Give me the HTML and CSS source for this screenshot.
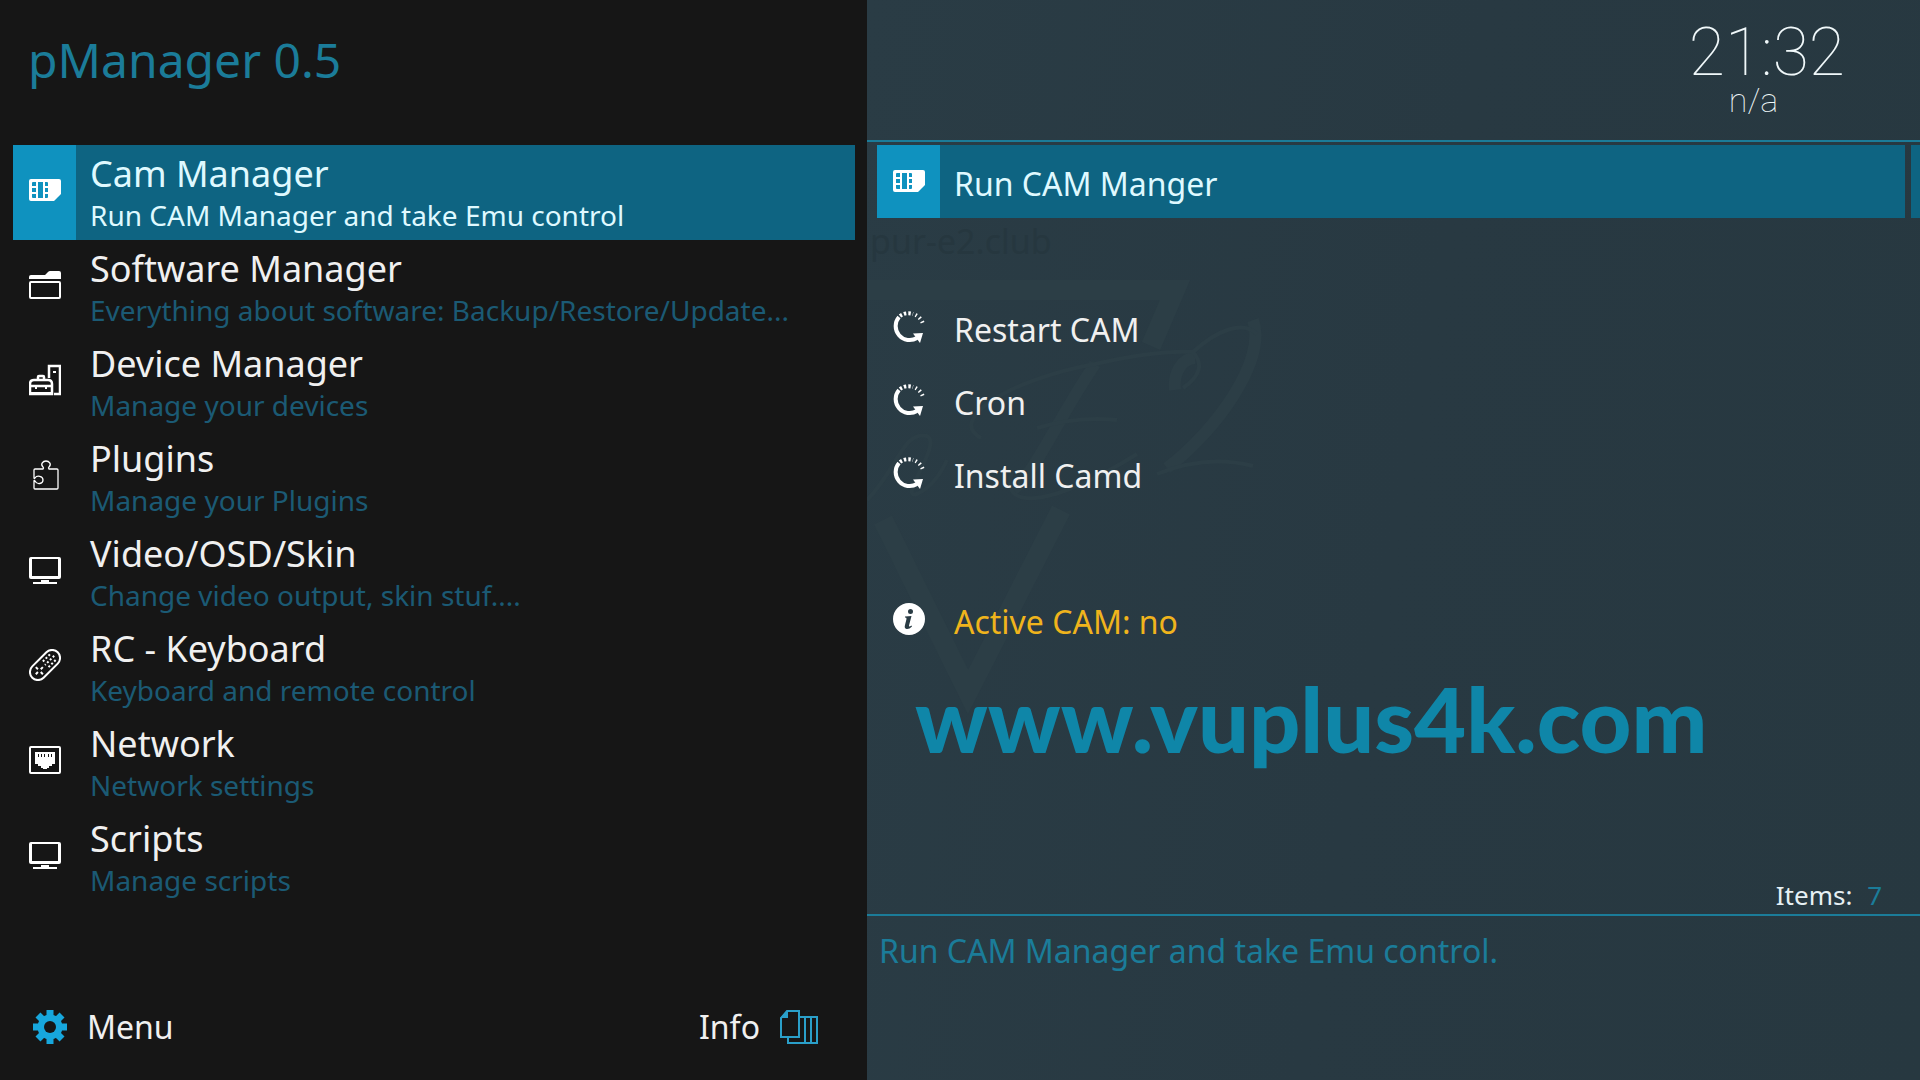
FILE: index.html
```html
<!DOCTYPE html>
<html lang="en">
<head>
<meta charset="utf-8">
<meta name="viewport" content="width=device-width, initial-scale=1">
<title>pManager 0.5</title>
<link rel="stylesheet" href="styles.css">
</head>
<body>
<svg class="defs" aria-hidden="true">
  <symbol id="sim" viewBox="0 0 32 32">
    <path fill="currentColor" fill-rule="evenodd" d="M2 5H30Q32 5 32 7V20L25 27H2Q0 27 0 25V7Q0 5 2 5ZM4 8Q3 8 3 9V12H7V8ZM3 14V18H7V14ZM3 20V23Q3 24 4 24H7V20ZM9 8V24H14V8ZM16 8V12H19V9Q19 8 18 8ZM16 14V18H19V14ZM16 20V24H18Q19 24 19 23V20Z"/>
  </symbol>
  <symbol id="folder" viewBox="0 0 32 32">
    <path fill="currentColor" d="M0 10V8Q0 6 2 6H16L19 3Q20 2 21 2H30Q32 2 32 4V10Z"/>
    <rect x="1" y="13" width="30" height="16" rx="1" fill="none" stroke="currentColor" stroke-width="2"/>
  </symbol>
  <symbol id="toolbox" viewBox="0 0 32 32">
    <g fill="none" stroke="currentColor" stroke-width="2.500">
      <path d="M20 14V2H31V30H25"/>
      <path d="M1 30V20Q1 16 5 16H19Q23 16 23 20V30ZM1 22H23M9 16V13Q9 12 10 12H14Q15 12 15 13V16"/>
    </g>
    <path fill="currentColor" d="M24 7h3v2h-3zM6 22h2v3H6zM16 22h2v3h-2zM0 28h24v3H0z"/>
  </symbol>
  <symbol id="puzzle" viewBox="0 0 32 32">
    <path fill="none" stroke="currentColor" stroke-width="1.300" stroke-linejoin="round" d="M6 10H14Q15 9 14 8C11 5 14 2 17 2S23 5 20 8Q19 9 20 10H28Q29 10 29 11V29Q29 30 28 30H6Q5 30 5 29V22Q5 21 6 22C8 26 14 25 14 21S8 16 6 19Q5 20 5 19V11Q5 10 6 10Z"/>
  </symbol>
  <symbol id="monitor" viewBox="0 0 32 32">
    <path fill="currentColor" fill-rule="evenodd" d="M2 3H30Q32 3 32 5V23Q32 25 30 25H2Q0 25 0 23V5Q0 3 2 3ZM3 5V22H29V5ZM12 26H20V28H28V30H4V28H12Z"/>
  </symbol>
  <symbol id="remote" viewBox="0 0 32 32">
    <g transform="rotate(45 16 16)" fill="none" stroke="currentColor">
      <rect x="8" y="-2" width="16" height="36" rx="8" stroke-width="2"/>
      <path stroke-width="2" stroke-dasharray="2 2" d="M12 5V16M16 3V16M20 5V16"/>
      <path stroke-width="2" d="M16 19V22M16 26V29M11 24H14M18 24H21"/>
    </g>
  </symbol>
  <symbol id="network" viewBox="0 0 32 32">
    <rect x="1" y="3" width="30" height="26" rx="1" fill="none" stroke="currentColor" stroke-width="2"/>
    <path fill="currentColor" fill-rule="evenodd" d="M6 8H26V20H23V22H20V24H18V25H14V24H12V22H9V20H6ZM9 10V13H10V10ZM12 10V13H13V10ZM15 10V13H16V10ZM19 10V13H20V10ZM22 10V13H23V10Z"/>
  </symbol>
  <symbol id="restart" viewBox="0 0 32 32">
    <path fill="none" stroke="currentColor" stroke-width="4" d="M6 6A14 14 0 0 0 24 27"/>
    <path fill="none" stroke="currentColor" stroke-width="4" stroke-dasharray="2.4 2" d="M7 5A14 14 0 0 1 20 3"/>
    <path fill="none" stroke="currentColor" stroke-width="4" stroke-dasharray="1.4 3.2" d="M22.500 4A14 14 0 0 1 30 13"/>
    <path fill="currentColor" d="M20 22.500L30 22L27 32Z"/>
  </symbol>
  <symbol id="about" viewBox="0 0 32 32">
    <path fill="currentColor" fill-rule="evenodd" d="M16 0A16 16 0 1 1 16 32A16 16 0 1 1 16 0ZM17.500 6A2.400 2.400 0 1 0 17.500 11A2.400 2.400 0 1 0 17.500 6ZM12 13.500L18.500 13L16 22.500Q15.700 24.300 18.500 22.500L19 23.500Q16 26.500 13.500 26Q11 25.500 12 22L13.500 16Q13.800 14.600 12 14.600Z"/>
  </symbol>
  <symbol id="gear" viewBox="0 0 34 34">
    <g fill="currentColor">
      <path id="tooth" d="M13.500 0H20.500V34H13.500Z"/>
      <use href="#tooth" transform="rotate(45 17 17)"/>
      <use href="#tooth" transform="rotate(90 17 17)"/>
      <use href="#tooth" transform="rotate(135 17 17)"/>
      <circle cx="17" cy="17" r="12.500"/>
    </g>
    <circle cx="17" cy="17" r="6" fill="#161616"/>
  </symbol>
  <symbol id="pages" viewBox="0 0 38 34">
    <path fill="none" stroke="currentColor" stroke-width="2" d="M7 1H19V27H1V8ZM8 28V33H37V7H20M25 7V32M31 7V32"/>
    <path fill="currentColor" d="M8 0V8H0Z"/>
  </symbol>
</svg>

<main class="screen">
  <section class="side">
    <h1 class="title">pManager 0.5</h1>
    <ul class="menu">
      <li><button class="entry selected"><span class="tile"><svg class="icon"><use href="#sim"/></svg></span><span class="label"><span class="name">Cam Manager</span><span class="hint">Run CAM Manager and take Emu control</span></span></button></li>
      <li><button class="entry"><span class="tile"><svg class="icon"><use href="#folder"/></svg></span><span class="label"><span class="name">Software Manager</span><span class="hint">Everything about software: Backup/Restore/Update...</span></span></button></li>
      <li><button class="entry"><span class="tile"><svg class="icon"><use href="#toolbox"/></svg></span><span class="label"><span class="name">Device Manager</span><span class="hint">Manage your devices</span></span></button></li>
      <li><button class="entry"><span class="tile"><svg class="icon"><use href="#puzzle"/></svg></span><span class="label"><span class="name">Plugins</span><span class="hint">Manage your Plugins</span></span></button></li>
      <li><button class="entry"><span class="tile"><svg class="icon"><use href="#monitor"/></svg></span><span class="label"><span class="name">Video/OSD/Skin</span><span class="hint">Change video output, skin stuf....</span></span></button></li>
      <li><button class="entry"><span class="tile"><svg class="icon"><use href="#remote"/></svg></span><span class="label"><span class="name">RC - Keyboard</span><span class="hint">Keyboard and remote control</span></span></button></li>
      <li><button class="entry"><span class="tile"><svg class="icon"><use href="#network"/></svg></span><span class="label"><span class="name">Network</span><span class="hint">Network settings</span></span></button></li>
      <li><button class="entry"><span class="tile"><svg class="icon"><use href="#monitor"/></svg></span><span class="label"><span class="name">Scripts</span><span class="hint">Manage scripts</span></span></button></li>
    </ul>
    <footer class="keys">
      <button class="key"><svg class="gear"><use href="#gear"/></svg>Menu</button>
      <button class="key">Info<svg class="pages"><use href="#pages"/></svg></button>
    </footer>
  </section>

  <section class="detail">
    <div class="backdrop" aria-hidden="true">
      <span class="club">pur-e2.club</span>
      <svg class="art" viewBox="0 0 420 500">
        <g fill="none" stroke="#2c3e46">
          <path stroke-width="20" d="M0 60H308L284 116M16 290L101 462L194 280"/>
          <path stroke-width="12" d="M228 134C190 190 170 240 146 260M386 90C400 130 350 200 300 238M308 160C306 142 316 128 328 128"/>
          <path stroke-width="4" d="M114 208C80 190 140 150 228 134Q290 120 326 122C350 100 376 90 390 104M326 122Q342 140 316 158M170 198Q210 186 250 190M146 240C130 280 180 280 270 224M290 244Q340 224 386 236M0 270C30 240 36 200 60 206C76 214 30 270 50 264Q68 256 80 230"/>
        </g>
      </svg>
    </div>
    <header class="status">
      <div class="watch">
        <time class="clock">21:32</time>
        <span class="temp">n/a</span>
      </div>
    </header>
    <div class="content">
      <ul class="actions">
        <li><button class="action selected"><span class="tile"><svg class="icon"><use href="#sim"/></svg></span>Run CAM Manger</button></li>
        <li class="blank"></li>
        <li><button class="action"><span class="tile"><svg class="icon"><use href="#restart"/></svg></span>Restart CAM</button></li>
        <li><button class="action"><span class="tile"><svg class="icon"><use href="#restart"/></svg></span>Cron</button></li>
        <li><button class="action"><span class="tile"><svg class="icon"><use href="#restart"/></svg></span>Install Camd</button></li>
        <li class="blank"></li>
        <li><button class="action notice"><span class="tile"><svg class="icon"><use href="#about"/></svg></span>Active CAM: no</button></li>
      </ul>
      <div class="scroll"></div>
    </div>
    <p class="site">www.vuplus4k.com</p>
    <p class="count">Items: <span class="total">7</span></p>
    <p class="summary">Run CAM Manager and take Emu control.</p>
  </section>
</main>
</body>
</html>
```
FILE: styles.css
```css
* {
  box-sizing: border-box;
}

body {
  margin: 0;
  background: #161616;
  color: #f0f0f0;
  font-family: "Noto Sans", "Open Sans", sans-serif;
}

.defs {
  position: absolute;
  width: 0;
  height: 0;
}

.screen {
  display: grid;
  grid-template-columns: 867fr 1053fr;
  min-height: 100vh;
}

ul {
  list-style: none;
  margin: 0;
  padding: 0;
}

p {
  margin: 0;
}

button {
  display: flex;
  padding: 0;
  border: 0;
  background: none;
  color: inherit;
  font: inherit;
  text-align: left;
  white-space: nowrap;
}

.side {
  display: flex;
  flex-direction: column;
  padding: 0 12px 0 13px;
}

.title {
  height: 145px;
  margin: 0;
  padding: 27px 0 0 15px;
  color: #1b7c99;
  font-size: 48px;
  font-weight: 400;
  line-height: 66px;
}

.entry {
  width: 100%;
  height: 95px;
}

.tile {
  display: flex;
  flex: none;
  align-items: center;
  justify-content: center;
  width: 63px;
  padding-bottom: 2px;
}

.entry .tile {
  padding-bottom: 6px;
}

.icon {
  width: 32px;
  height: 32px;
  color: #fff;
}

.selected {
  background: #0e6482;
  color: #dff9ff;
}

.selected .tile {
  background: #0f92bf;
}

.label {
  display: flex;
  flex-direction: column;
  padding: 4px 0 0 14px;
}

.name {
  font-size: 36px;
  line-height: 50px;
}

.hint {
  color: #1b5a74;
  font-size: 28px;
  line-height: 32px;
}

.selected .hint {
  color: inherit;
}

.keys {
  display: flex;
  justify-content: space-between;
  margin-top: auto;
  padding: 0 37px 31px 20px;
}

.key {
  align-items: center;
  gap: 20px;
  font-size: 32px;
  line-height: 44px;
}

.gear {
  width: 34px;
  height: 34px;
  color: #17a7dd;
}

.pages {
  width: 38px;
  height: 34px;
  color: #2a9fc9;
}

.detail {
  position: relative;
  display: flex;
  flex-direction: column;
  background: linear-gradient(100deg, #2a3c45, #283942 50%, #273840);
}

.backdrop {
  position: absolute;
  inset: 0;
  overflow: hidden;
}

.club {
  position: absolute;
  top: 218px;
  left: 3px;
  color: #26373f;
  font-size: 34px;
  line-height: 46px;
}

.art {
  position: absolute;
  top: 230px;
  left: 0;
  width: 420px;
  height: 500px;
}

.status {
  position: relative;
  display: flex;
  justify-content: flex-end;
  height: 142px;
  padding: 16px 75px 0 0;
  border-bottom: 2px solid #1b7c99;
}

.watch {
  display: flex;
  flex-direction: column;
  color: #f0f8fa;
  font-family: Roboto, sans-serif;
}

.clock {
  font-size: 66px;
  font-weight: 100;
  line-height: 74px;
}

.temp {
  padding-left: 40px;
  font-size: 34px;
  font-weight: 100;
  line-height: 20px;
}

.content {
  position: relative;
  display: flex;
  gap: 6px;
  padding: 3px 0 0 10px;
}

.actions {
  flex: 1;
}

.scroll {
  width: 9px;
  height: 73px;
  background: #0e6482;
}

.action {
  gap: 14px;
  width: 100%;
  height: 73px;
  font-size: 32px;
  line-height: 78px;
}

.blank {
  height: 73px;
}

.notice {
  color: #f0b41c;
}

.site {
  position: absolute;
  top: 664px;
  left: 48px;
  color: #0f86a8;
  font-family: Lato, sans-serif;
  font-size: 90px;
  font-weight: 900;
  line-height: 108px;
}

.count {
  position: relative;
  margin-top: 220px;
  padding: 0 38px 0 0;
  border-bottom: 2px solid #1b7c99;
  color: #e6f0f4;
  font-size: 26px;
  line-height: 38px;
  text-align: right;
}

.total {
  padding-left: 8px;
  color: #1b7c99;
}

.summary {
  position: relative;
  padding: 13px 12px 0;
  color: #1b7c99;
  font-size: 32px;
  line-height: 44px;
}
```
